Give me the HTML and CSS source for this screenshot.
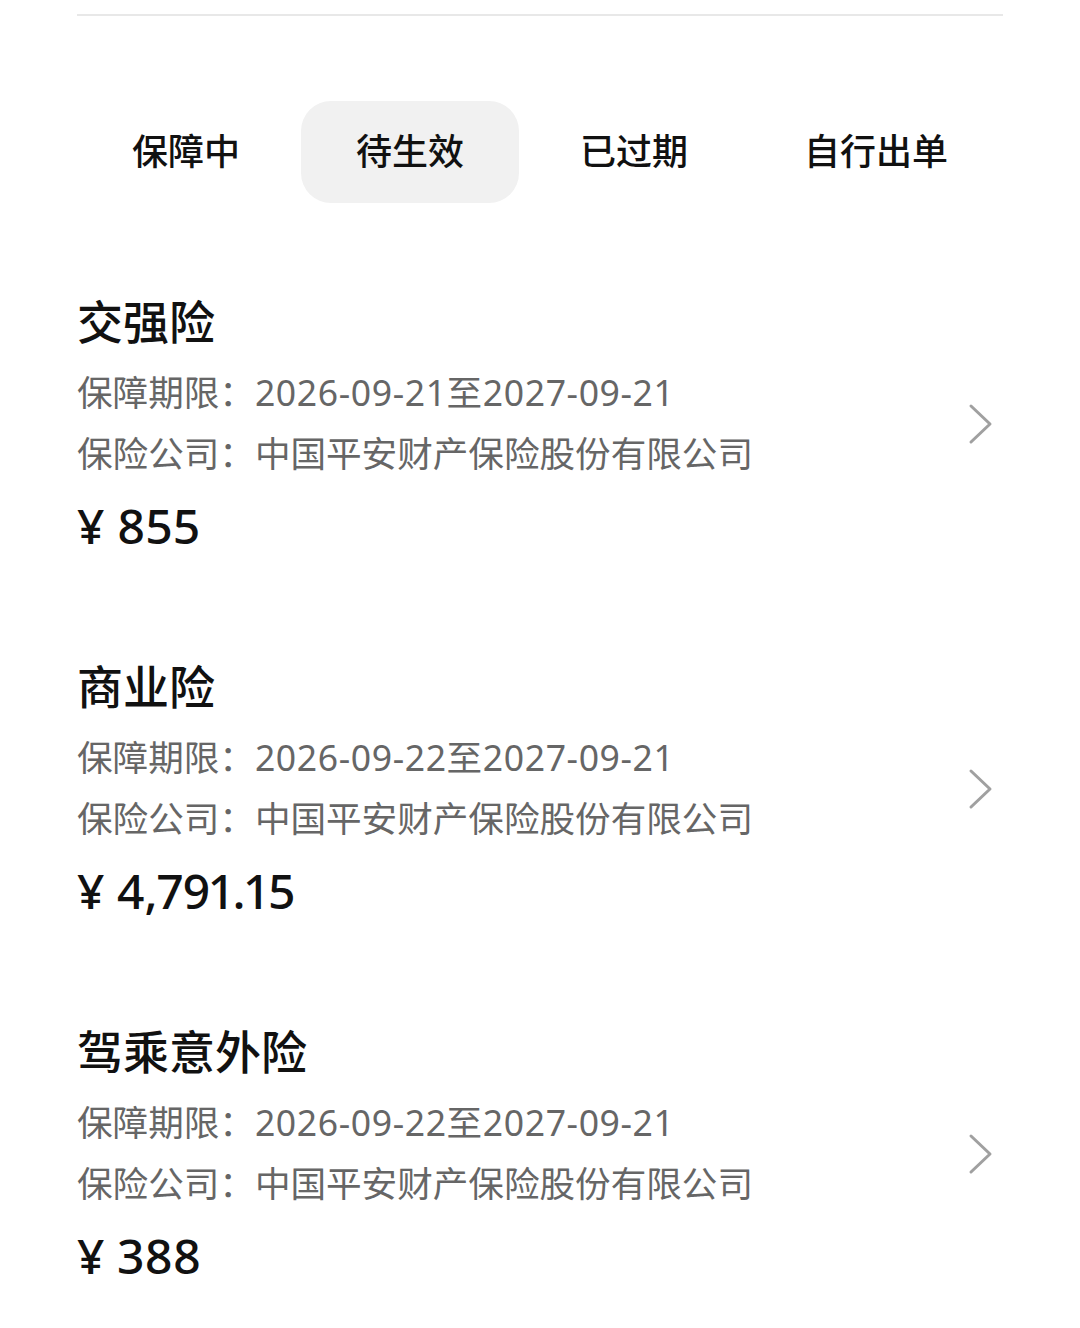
FILE: index.html
```html
<!DOCTYPE html>
<html lang="zh-CN">
<head>
    <meta charset="UTF-8">
    <meta name="viewport" content="width=device-width, initial-scale=1.0">
    <title>我的保单</title>
    <link rel="stylesheet" href="styles.css">
</head>
<body>
    <div class="page">
        <div class="divider"></div>

        <div class="tabs">
            <div class="tab">保障中</div>
            <div class="tab active">待生效</div>
            <div class="tab">已过期</div>
            <div class="tab">自行出单</div>
        </div>

        <div class="policy-list">
            <div class="policy">
                <div class="policy-info">
                    <div class="policy-name">交强险</div>
                    <div class="policy-row">保障期限：<span class="date">2026-09-21至2027-09-21</span></div>
                    <div class="policy-row">保险公司：中国平安财产保险股份有限公司</div>
                    <div class="policy-price">¥ 855</div>
                </div>
                <svg class="arrow" width="26" height="42" viewBox="0 0 26 42">
                    <polyline points="3,3 22,21 3,39" fill="none" stroke="#a0a0a0" stroke-width="3" stroke-linecap="round" stroke-linejoin="round"/>
                </svg>
            </div>

            <div class="policy">
                <div class="policy-info">
                    <div class="policy-name">商业险</div>
                    <div class="policy-row">保障期限：<span class="date">2026-09-22至2027-09-21</span></div>
                    <div class="policy-row">保险公司：中国平安财产保险股份有限公司</div>
                    <div class="policy-price">¥ 4,791.15</div>
                </div>
                <svg class="arrow" width="26" height="42" viewBox="0 0 26 42">
                    <polyline points="3,3 22,21 3,39" fill="none" stroke="#a0a0a0" stroke-width="3" stroke-linecap="round" stroke-linejoin="round"/>
                </svg>
            </div>

            <div class="policy">
                <div class="policy-info">
                    <div class="policy-name">驾乘意外险</div>
                    <div class="policy-row">保障期限：<span class="date">2026-09-22至2027-09-21</span></div>
                    <div class="policy-row">保险公司：中国平安财产保险股份有限公司</div>
                    <div class="policy-price">¥ 388</div>
                </div>
                <svg class="arrow" width="26" height="42" viewBox="0 0 26 42">
                    <polyline points="3,3 22,21 3,39" fill="none" stroke="#a0a0a0" stroke-width="3" stroke-linecap="round" stroke-linejoin="round"/>
                </svg>
            </div>
        </div>
    </div>
</body>
</html>
```

FILE: styles.css
```css
body {
    margin: 0;
    background-color: #fff;
    font-family: "Noto Sans", "Noto Sans CJK SC", sans-serif;
    color: #111;
}

.page {
    padding: 14px 77px 0;
}

.divider {
    height: 2px;
    background-color: #e8e8e8;
}

.tabs {
    display: flex;
    gap: 6px;
    margin-top: 85px;
}

.tab {
    padding: 0 55px;
    height: 102px;
    line-height: 102px;
    font-size: 36px;
    font-weight: 500;
    border-radius: 30px;
    white-space: nowrap;
}

.tab.active {
    background-color: #f1f1f1;
}

.policy-list {
    margin-top: 88px;
}

.policy {
    display: flex;
    align-items: center;
    justify-content: space-between;
    margin-bottom: 100px;
}

.policy-name {
    font-size: 46px;
    font-weight: 500;
    line-height: 60px;
    margin-bottom: 11px;
}

.policy-row {
    font-size: 35.6px;
    line-height: 61px;
    color: #666;
}

.date {
    letter-spacing: 0.6px;
}

.policy-price {
    font-size: 48px;
    font-weight: 500;
    line-height: 60px;
    margin-top: 12px;
    font-variant-numeric: proportional-nums;
}

.arrow {
    margin-right: 9px;
}
```
